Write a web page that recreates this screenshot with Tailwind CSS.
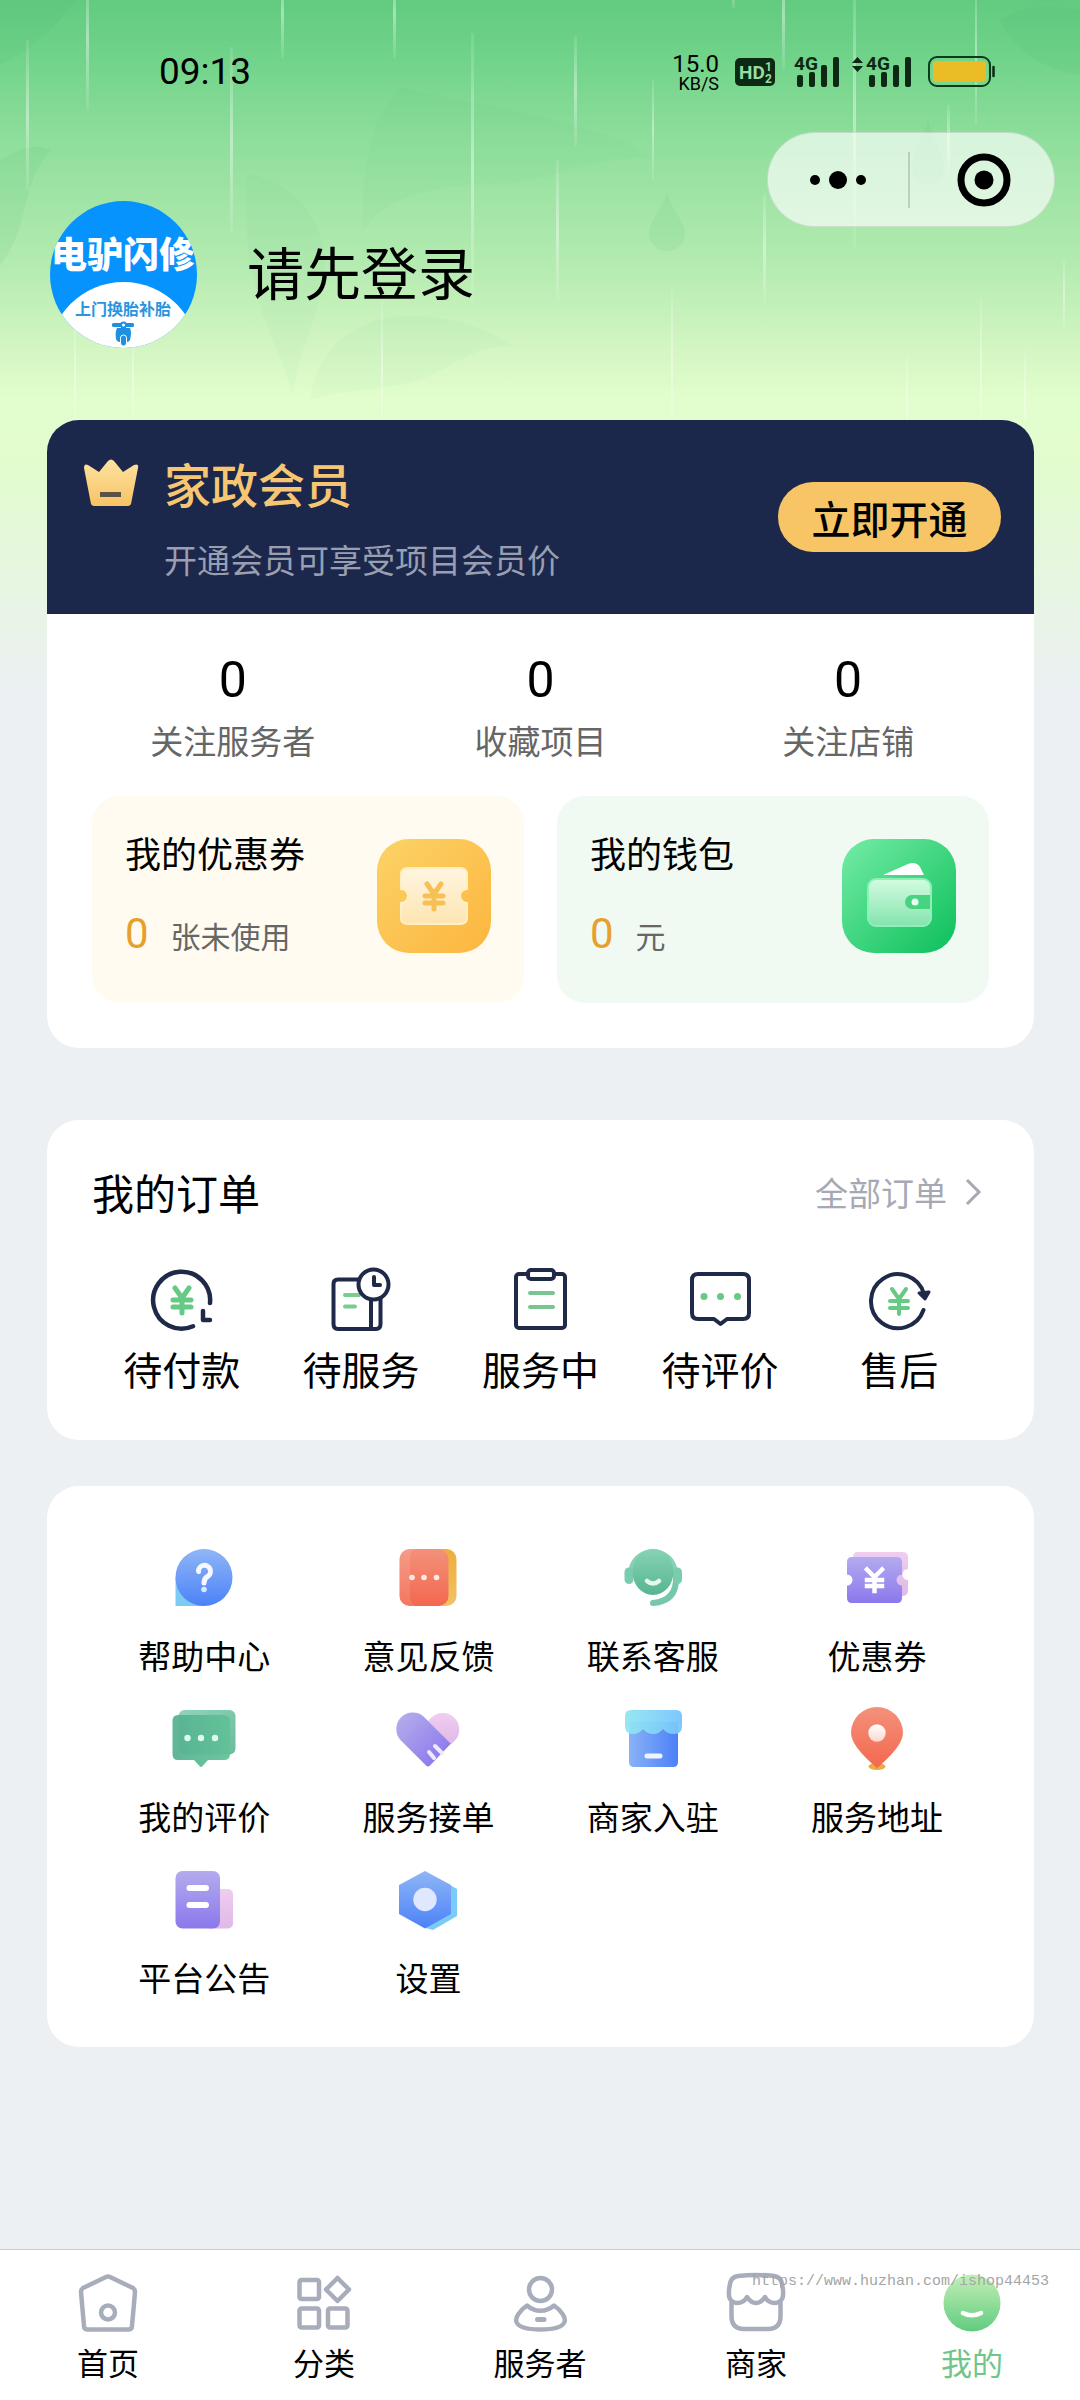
<!DOCTYPE html>
<html lang="zh-CN">
<head>
<meta charset="utf-8">
<meta name="viewport" content="width=device-width, initial-scale=1">
<title>我的</title>
<script src="https://cdn.jsdelivr.net/npm/@tailwindcss/browser@4"></script>
</head>
<body class="bg-[#ecf0f3] text-black font-['Noto_Sans_CJK_SC',sans-serif]">

<!-- shared gradients and the yen glyph -->
<svg class="absolute w-0 h-0" aria-hidden="true">
  <defs>
    <linearGradient id="blue" x1="0" y1="0" x2="0" y2="1"><stop offset="0" stop-color="#8fb6f6"/><stop offset="1" stop-color="#4c82f8"/></linearGradient>
    <linearGradient id="blueH" x1="0" y1="0" x2="1" y2="0"><stop offset="0" stop-color="#8ab2f6"/><stop offset="1" stop-color="#4c80f8"/></linearGradient>
    <linearGradient id="cyan" x1="0" y1="0" x2="1" y2="0"><stop offset="0" stop-color="#92e6f2"/><stop offset="1" stop-color="#76c4fb"/></linearGradient>
    <linearGradient id="red" x1="0" y1="0" x2="0" y2="1"><stop offset="0" stop-color="#f3917b"/><stop offset="1" stop-color="#f3684f"/></linearGradient>
    <linearGradient id="orange" x1="0" y1="0" x2="0" y2="1"><stop offset="0" stop-color="#eead3c"/><stop offset="1" stop-color="#f2c265"/></linearGradient>
    <linearGradient id="purple" x1="0" y1="0" x2="0" y2="1"><stop offset="0" stop-color="#b3abee"/><stop offset="1" stop-color="#8b78ec"/></linearGradient>
    <linearGradient id="purpleD" x1="0" y1="0" x2="1" y2="1"><stop offset="0" stop-color="#b6b0ea"/><stop offset="1" stop-color="#8770ee"/></linearGradient>
    <linearGradient id="pink" x1="0" y1="0" x2="0" y2="1"><stop offset="0" stop-color="#efcdef"/><stop offset="1" stop-color="#dfb9e8"/></linearGradient>
    <linearGradient id="teal" x1="0" y1="0" x2="0" y2="1"><stop offset="0" stop-color="#86d3b4"/><stop offset="1" stop-color="#58b590"/></linearGradient>
    <linearGradient id="tealH" x1="0" y1="0" x2="1" y2="0"><stop offset="0" stop-color="#55b092"/><stop offset="1" stop-color="#61c296"/></linearGradient>
    <linearGradient id="tealL" x1="0" y1="0" x2="1" y2="1"><stop offset="0" stop-color="#8fd4bb"/><stop offset="1" stop-color="#6cbc9d"/></linearGradient>
    <linearGradient id="gold" x1="0" y1="0" x2="1" y2="1"><stop offset="0" stop-color="#fbd366"/><stop offset="1" stop-color="#fdb53f"/></linearGradient>
    <linearGradient id="green" x1="0" y1="0" x2="1" y2="1"><stop offset="0" stop-color="#74eca6"/><stop offset="1" stop-color="#0cbf5a"/></linearGradient>
    <linearGradient id="crown" x1="0" y1="0" x2="0" y2="1"><stop offset="0" stop-color="#fde3a0"/><stop offset="1" stop-color="#f7c364"/></linearGradient>
    <linearGradient id="ticket" x1="0" y1="0" x2="0" y2="1"><stop offset="0" stop-color="#fff5e0"/><stop offset="1" stop-color="#fee5b2"/></linearGradient>
    <linearGradient id="wallet" x1="0" y1="0" x2="0" y2="1"><stop offset="0" stop-color="#d3fbe0"/><stop offset="1" stop-color="#84e4ae"/></linearGradient>
    <linearGradient id="face" x1="0" y1="0" x2="0" y2="1"><stop offset="0" stop-color="#c2f0b6"/><stop offset="1" stop-color="#62cb80"/></linearGradient>
    <linearGradient id="pearl" x1="0" y1="0" x2="0" y2="1"><stop offset="0" stop-color="#ffffff"/><stop offset="1" stop-color="#fdd6cf"/></linearGradient>
    <linearGradient id="rain" x1="0" y1="0" x2="0" y2="1"><stop offset="0" stop-color="#fff" stop-opacity=".1"/><stop offset=".5" stop-color="#fff" stop-opacity=".42"/><stop offset="1" stop-color="#fff" stop-opacity=".08"/></linearGradient>
    <path id="yen" d="M-7-12L0-2L7-12M0-2V13M-9 0H9M-9 7H9" fill="none" stroke-linecap="round" stroke-linejoin="round"/>
    <g id="bars"><rect x="3" y="19" width="6" height="12" rx="2"/><rect x="15" y="16" width="6" height="15" rx="2"/><rect x="27" y="9" width="6" height="22" rx="2"/><rect x="39" y="1" width="6" height="30" rx="2"/></g>
  </defs>
</svg>

<div class="relative min-h-screen flex flex-col">

  <!-- rain backdrop -->
  <div class="absolute inset-x-0 top-0 h-[700px] bg-[linear-gradient(to_bottom,#62cb80_0px,#6ed288_50px,#90df9c_145px,#b4ebb0_265px,#d2f5c2_345px,#e2fecd_400px,#e2fccf_470px,#ecf0f3_690px)]">
    <svg class="w-full h-[420px]" viewBox="0 0 1080 420" preserveAspectRatio="none" aria-hidden="true">
      <g fill="#40b070" fill-opacity=".035">
        <path d="M363 232C360 150 380 105 402 88C470 105 600 120 652 157C560 160 560 185 480 184C430 186 380 200 363 232Z"/>
        <path d="M247 173C295 185 327 220 325 270C320 320 300 340 293 395C275 330 240 300 247 173Z"/>
        <path d="M310 400C320 330 380 310 430 317C480 322 500 340 515 347C470 342 450 375 400 385C370 390 340 390 310 400Z"/>
      </g>
      <g fill="#40b070" fill-opacity=".09">
        <path d="M0 0H75C60 25 30 50 0 65Z"/>
        <path d="M0 160Q30 140 52 150C20 180 30 230 0 265Z"/>
        <path d="M1000 20C1030 0 1060 8 1080 10V75C1040 70 1010 45 1000 20Z"/>
        <path d="M667 192C671 210 685 220 685 234A18 17 0 0 1 649 234C649 220 663 210 667 192Z"/>
        <path d="M928 118C932 140 944 155 944 168A16 17 0 0 1 912 168C912 155 924 140 928 118Z"/>
      </g>
      <g fill="url(#rain)">
        <rect x="26" y="40" width="3" height="150"/><rect x="86" y="-30" width="3" height="140"/><rect x="230" y="47" width="3" height="185"/>
        <rect x="281" y="-30" width="3" height="88"/><rect x="393" y="-30" width="3" height="88"/><rect x="471" y="33" width="3" height="270"/>
        <rect x="574" y="36" width="3" height="110"/><rect x="556" y="160" width="3" height="140"/><rect x="652" y="80" width="2" height="100"/>
        <rect x="732" y="-30" width="3" height="38"/><rect x="782" y="-40" width="3" height="110"/><rect x="853" y="-30" width="3" height="278"/>
        <rect x="947" y="105" width="3" height="68"/><rect x="975" y="-20" width="2" height="145"/><rect x="763" y="195" width="3" height="108"/>
        <rect x="671" y="290" width="2" height="140"/><rect x="980" y="300" width="2" height="140"/><rect x="381" y="300" width="2" height="140"/>
        <rect x="74" y="320" width="2" height="110"/><rect x="132" y="330" width="2" height="100"/><rect x="1024" y="350" width="2" height="90"/>
        <rect x="906" y="355" width="2" height="90"/><rect x="1063" y="260" width="2" height="70"/>
      </g>
    </svg>
  </div>

  <!-- status bar -->
  <div class="relative h-36 pl-[159px] pr-[84px] flex items-center justify-between font-[Roboto,sans-serif]">
    <span class="text-[37px] leading-10">09:13</span>
    <div class="flex items-center text-[#0c2914]">
      <div class="mr-4 flex flex-col items-end text-black">
        <span class="text-2xl leading-6">15.0</span>
        <span class="text-lg leading-4">KB/S</span>
      </div>
      <svg class="w-10 h-7 mr-[19px]" viewBox="0 0 40 28" aria-label="HD">
        <rect width="40" height="28" rx="5" fill="currentColor"/>
        <g fill="#98dca4" font-family="Roboto, sans-serif" font-weight="700"><text x="4" y="21" font-size="19">HD</text><text x="30" y="13" font-size="12">1</text><text x="30" y="25" font-size="12">2</text></g>
      </svg>
      <svg class="w-[46px] h-8 mr-3 overflow-visible" viewBox="0 0 46 32" aria-label="4G">
        <use href="#bars" fill="currentColor"/>
        <text x="0" y="14" font-size="19" font-weight="700" fill="currentColor" font-family="Roboto, sans-serif">4G</text>
      </svg>
      <svg class="w-[60px] h-8 mr-4 overflow-visible" viewBox="0 0 60 32" aria-label="4G">
        <path d="M0 7L5.500 1L11 7ZM0 10H11L5.500 16Z" fill="currentColor"/>
        <use href="#bars" x="14" fill="currentColor"/>
        <text x="14" y="14" font-size="19" font-weight="700" fill="currentColor" font-family="Roboto, sans-serif">4G</text>
      </svg>
      <svg class="w-[68px] h-8" viewBox="0 0 68 32" aria-label="电量">
        <rect x="1" y="1" width="61" height="29" rx="8" fill="none" stroke="#0a3d1a" stroke-width="2"/>
        <rect x="5" y="5" width="53" height="21" rx="4" fill="#eabd27"/>
        <path d="M65.500 11V20" stroke="#0c2914" stroke-width="2.500" stroke-linecap="round"/>
      </svg>
    </div>
  </div>

  <!-- mini-program capsule -->
  <div class="absolute top-[132px] right-[25px] w-72 h-[95px] rounded-full bg-white/65 border border-black/10 flex items-center">
    <button type="button" class="flex-1 h-full flex items-center justify-center" aria-label="更多">
      <svg class="w-16 h-6" viewBox="0 0 64 24"><circle cx="9" cy="12" r="5"/><circle cx="32" cy="12" r="9"/><circle cx="55" cy="12" r="5"/></svg>
    </button>
    <span class="w-0.5 h-14 bg-black/15"></span>
    <button type="button" class="flex-1 h-full pl-1 flex items-center justify-center" aria-label="关闭">
      <svg class="w-14 h-14" viewBox="0 0 56 56"><circle cx="28" cy="28" r="23" fill="none" stroke="#000" stroke-width="7"/><circle cx="28" cy="28" r="9.500"/></svg>
    </button>
  </div>

  <main class="relative flex-1 pl-[47px] pr-[46px] pb-10">
    <!-- profile -->
    <a href="#login" class="mt-[57px] ml-[3px] flex items-center gap-[50px]">
      <svg class="w-[147px] h-[147px] rounded-full" viewBox="0 0 147 147" aria-label="电驴闪修">
        <rect width="147" height="147" fill="#0793fe"/>
        <circle cx="73.500" cy="156" r="75" fill="#fff"/>
        <text x="73" y="67" text-anchor="middle" font-size="36" font-weight="900" fill="#fff" font-family="Noto Sans CJK SC, sans-serif">电驴闪修</text>
        <text x="73" y="114" text-anchor="middle" font-size="16" font-weight="700" fill="#2a94df" font-family="Noto Sans CJK SC, sans-serif">上门换胎补胎</text>
        <g fill="#1f8fe0"><rect x="62" y="122" width="22" height="4" rx="1.500"/><circle cx="73.500" cy="124" r="3.500"/><path d="M67 127H80Q82 131 80 139Q79 141 77 141H70Q67 141 66 138Q65 131 67 127Z"/><rect x="70.500" y="134" width="6" height="11" rx="3" stroke="#fff"/></g>
        <circle cx="73.500" cy="124" r="1.500" fill="#fff"/>
      </svg>
      <span class="mb-2.5 text-[57px] leading-[72px]">请先登录</span>
    </a>

    <!-- membership, stats, assets -->
    <section class="mt-[72px] rounded-[32px] overflow-hidden bg-white">
      <div class="h-[194px] pl-9 pr-[33px] bg-[#1c284b] flex items-center">
        <div class="flex-1 grid grid-cols-[56px_1fr] gap-x-[25px] gap-y-5 items-center">
          <svg class="w-14 h-12" viewBox="0 0 56 48" aria-hidden="true"><path d="M1 9Q1 4 5 6L16 13L25 2Q28-1 31 2L40 13L51 6Q56 4 55 9L48 45Q47 47 45 47H11Q9 47 8 45Z" fill="url(#crown)"/><rect x="17" y="33" width="21" height="5" fill="#5b5347"/></svg>
          <h2 class="text-[47px] leading-16 font-medium text-[#f7c672]">家政会员</h2>
          <p class="col-start-2 text-[33px] leading-12 text-[#999fb1]">开通会员可享受项目会员价</p>
        </div>
        <button type="button" class="w-[223px] h-[70px] rounded-full bg-[#f8c566] text-[39px] leading-[68px] font-medium">立即开通</button>
      </div>

      <div class="mx-8 pt-[38px] grid grid-cols-3 text-center">
        <a href="#workers"><strong class="block text-[50px] leading-14 font-normal font-[Roboto,sans-serif]">0</strong><span class="block mt-3 text-[33px] leading-10 text-[#666]">关注服务者</span></a>
        <a href="#favorites"><strong class="block text-[50px] leading-14 font-normal font-[Roboto,sans-serif]">0</strong><span class="block mt-3 text-[33px] leading-10 text-[#666]">收藏项目</span></a>
        <a href="#shops"><strong class="block text-[50px] leading-14 font-normal font-[Roboto,sans-serif]">0</strong><span class="block mt-3 text-[33px] leading-10 text-[#666]">关注店铺</span></a>
      </div>

      <div class="mt-9 px-[45px] pb-[45px] grid grid-cols-2 gap-[33px]">
        <a href="#coupons" class="h-[207px] pl-[33px] pr-[33px] rounded-[28px] bg-[#fffbf0] flex items-center justify-between">
          <div class="mb-2 flex flex-col gap-[30px]">
            <span class="text-4xl leading-12">我的优惠券</span>
            <span class="flex items-baseline gap-[22px] leading-14"><span class="text-[42px] text-[#e8a02c] font-[Roboto,sans-serif]">0</span><span class="text-[30px] text-[#666]">张未使用</span></span>
          </div>
          <svg class="w-[114px] h-[114px] mb-2" viewBox="0 0 114 114" aria-hidden="true">
            <rect width="114" height="114" rx="32" fill="url(#gold)"/>
            <path d="M31 29H83Q90 29 90 36V50A7 7 0 0 0 90 64V79Q90 85 83 85H31Q24 85 24 79V64A7 7 0 0 0 24 50V36Q24 29 31 29Z" fill="url(#ticket)" stroke="#fff0c4" stroke-width="2"/>
            <use href="#yen" x="57" y="57" stroke="#f7c055" stroke-width="5"/>
          </svg>
        </a>
        <a href="#wallet-page" class="h-[207px] pl-[33px] pr-[33px] rounded-[28px] bg-[#f0f9f2] flex items-center justify-between">
          <div class="mb-2 flex flex-col gap-[30px]">
            <span class="text-4xl leading-12">我的钱包</span>
            <span class="flex items-baseline gap-[22px] leading-14"><span class="text-[42px] text-[#e8a02c] font-[Roboto,sans-serif]">0</span><span class="text-[30px] text-[#666]">元</span></span>
          </div>
          <svg class="w-[114px] h-[114px] mb-2" viewBox="0 0 114 114" aria-hidden="true">
            <rect width="114" height="114" rx="32" fill="url(#green)"/>
            <path d="M41 36L66 25Q74 22 78 28L82 36Z" fill="#fff"/>
            <rect x="26" y="40" width="63" height="47" rx="8" fill="url(#wallet)" stroke="#8df0b8" stroke-width="2"/>
            <path d="M88 56H70A7 7 0 0 0 70 70H88Z" fill="#48d383"/><circle cx="73" cy="63" r="3.500" fill="#e8fff0"/>
          </svg>
        </a>
      </div>
    </section>

    <!-- orders -->
    <section class="mt-[72px] px-[45px] pt-12 pb-12 rounded-[32px] bg-white">
      <div class="flex items-center justify-between">
        <h2 class="text-[42px] leading-12">我的订单</h2>
        <a href="#orders" class="flex items-center gap-4 mr-1.5 text-[33px] leading-12 text-[#a6a9b3]">全部订单
          <svg class="w-5 h-7" viewBox="0 0 20 28" fill="none" stroke="currentColor" stroke-width="3" aria-hidden="true"><path d="M4 2L16 14L4 26"/></svg>
        </a>
      </div>
      <div class="mt-12 grid grid-cols-5 text-center text-[39px] leading-12">
        <a href="#pay" class="flex flex-col items-center gap-2">
          <svg class="w-18 h-18" viewBox="0 0 72 72" fill="none" stroke="#1f2948" stroke-width="4.500" stroke-linecap="round" stroke-linejoin="round" aria-hidden="true"><path d="M64 39A28.500 28.500 0 1 0 47 62.300M57 47V56H64"/><use href="#yen" x="36" y="36" stroke="#66ca85" stroke-width="5"/></svg>
          待付款</a>
        <a href="#wait" class="flex flex-col items-center gap-2">
          <svg class="w-18 h-18" viewBox="0 0 72 72" fill="none" stroke="#1f2948" stroke-width="4" stroke-linecap="round" stroke-linejoin="round" aria-hidden="true"><path d="M33 15.500H13Q8.500 15.500 8.500 20V60Q8.500 65 13 65H51Q55.500 65 55.500 60V34M46 35V64"/><path d="M20 31H34M20 42.500H30" stroke="#78cc8f"/><circle cx="48.500" cy="20.500" r="15" fill="#fff"/><path d="M49 13V21H55"/></svg>
          待服务</a>
        <a href="#doing" class="flex flex-col items-center gap-2">
          <svg class="w-18 h-18" viewBox="0 0 72 72" fill="none" stroke="#1f2948" stroke-width="4" stroke-linecap="round" stroke-linejoin="round" aria-hidden="true"><rect x="12" y="10" width="49" height="54" rx="3"/><rect x="24" y="6" width="26" height="9" rx="3" fill="#fff"/><path d="M26 29H49M26 43H49" stroke="#78c590"/></svg>
          服务中</a>
        <a href="#review" class="flex flex-col items-center gap-2">
          <svg class="w-18 h-18" viewBox="0 0 72 72" fill="none" stroke="#1f2948" stroke-width="4" stroke-linejoin="round" aria-hidden="true"><path d="M14 10H59Q65 10 65 16V49Q65 55 59 55H43L36.500 60L30 55H14Q8 55 8 49V16Q8 10 14 10Z"/><g fill="#66ca85" stroke="none"><circle cx="20" cy="32.500" r="3.500"/><circle cx="36.500" cy="32.500" r="3.500"/><circle cx="53.500" cy="32.500" r="3.500"/></g></svg>
          待评价</a>
        <a href="#after" class="flex flex-col items-center gap-2">
          <svg class="w-18 h-18" viewBox="0 0 72 72" fill="none" stroke="#1f2948" stroke-width="4" stroke-linecap="round" stroke-linejoin="round" aria-hidden="true"><path d="M61 30A27 27 0 1 0 60.500 46"/><path d="M56 29L66 28L62 35Z" fill="#1f2948" stroke-width="3"/><use href="#yen" x="36" y="37" stroke="#66ca85" stroke-width="4"/></svg>
          售后</a>
      </div>
    </section>

    <!-- tools -->
    <section class="mt-[46px] px-[45px] pt-[55px] pb-[50px] rounded-[32px] bg-white grid grid-cols-4 gap-y-[27px] text-center text-[33px] leading-10">
      <a href="#help" class="flex flex-col items-center gap-[22px]">
        <svg class="w-18 h-18" viewBox="0 0 72 72" aria-hidden="true"><path d="M7.500 36V65H36Z" fill="#7ccbf4"/><circle cx="36" cy="36.500" r="28.500" fill="url(#blue)"/><path d="M30.500 30.500A6 6 0 1 1 39.500 35.500Q36 37.500 36 42" fill="none" stroke="#f4f8ff" stroke-width="5" stroke-linecap="round"/><circle cx="36" cy="48.500" r="2.800" fill="#d9e6ff"/></svg>
        帮助中心</a>
      <a href="#feedback" class="flex flex-col items-center gap-[22px]">
        <svg class="w-18 h-18" viewBox="0 0 72 72" aria-hidden="true"><rect x="18" y="8" width="46.500" height="57" rx="10" fill="url(#orange)"/><rect x="7.500" y="8" width="49" height="57" rx="10" fill="url(#red)"/><path d="M25 8Q18 9 18 18V55Q18 64 25 65H17.500Q7.500 65 7.500 55V18Q7.500 8 17.500 8Z" fill="#fff" fill-opacity=".1"/><g fill="#ffeae5"><circle cx="20" cy="36.500" r="2.800"/><circle cx="32" cy="36.500" r="2.800"/><circle cx="44.500" cy="36.500" r="2.800"/></g></svg>
        意见反馈</a>
      <a href="#service" class="flex flex-col items-center gap-[22px]">
        <svg class="w-18 h-18" viewBox="0 0 72 72" aria-hidden="true"><path d="M11 33A25 25 0 0 1 61 33H56A20 20 0 0 0 16 33Z" fill="#86d3b4"/><path d="M59 36Q60 60 36 62" fill="none" stroke="#77c8aa" stroke-width="6" stroke-linecap="round"/><rect x="7.500" y="26.500" width="9" height="16.500" rx="4.500" fill="#7accae"/><rect x="56" y="26.500" width="9" height="16.500" rx="4.500" fill="#7accae"/><ellipse cx="36" cy="31" rx="20.500" ry="23" fill="url(#teal)"/><path d="M30 40Q36 45 42 40" fill="none" stroke="#e3f8ee" stroke-width="4.500" stroke-linecap="round"/></svg>
        联系客服</a>
      <a href="#coupon" class="flex flex-col items-center gap-[22px]">
        <svg class="w-18 h-18" viewBox="0 0 72 72" aria-hidden="true"><path d="M17 11H61Q67 11 67 16V28A5.500 5.500 0 0 0 67 39V49Q67 55 61 55H17Q12 55 12 49V16Q12 11 17 11Z" fill="url(#pink)"/><path d="M11 16H56Q61 16 61 21V33.500A5.500 5.500 0 0 0 61 44.500V57Q61 62 56 62H11Q6 62 6 57V44.500A5.500 5.500 0 0 0 6 33.500V21Q6 16 11 16Z" fill="url(#purple)"/><path d="M26 28.500L33.500 36L41 28.500M33.500 36V50M26 39H41M26 45H41" fill="none" stroke="#fff" stroke-width="4.500" stroke-linecap="square"/></svg>
        优惠券</a>
      <a href="#my-reviews" class="flex flex-col items-center gap-[22px]">
        <svg class="w-18 h-18" viewBox="0 0 72 72" aria-hidden="true"><rect x="10.500" y="8" width="57" height="44.500" rx="6" fill="url(#tealL)"/><path d="M10 13H56Q62 13 62 19V52Q62 58 56 58H40L34.500 64Q33 66 31.500 64L26 58H10Q4.500 58 4.500 52V19Q4.500 13 10 13Z" fill="url(#tealH)" fill-opacity=".93"/><g fill="#dcfbec"><circle cx="19.500" cy="36" r="3.200"/><circle cx="33" cy="36" r="3.200"/><circle cx="47" cy="36" r="3.200"/></g></svg>
        我的评价</a>
      <a href="#accept" class="flex flex-col items-center gap-[22px]">
        <svg class="w-18 h-18" viewBox="0 0 72 72" aria-hidden="true"><path d="M36 19L40 15A16.500 16.500 0 0 1 63.500 38L58.800 42.500Z" fill="url(#pink)"/><path d="M8.500 38A16.500 16.500 0 0 1 31.800 14.700L58.800 41.700L38 63.500Q36 65.500 34 63.500Z" fill="url(#purpleD)"/><path d="M37 50L42 56M43 44L50 51" fill="none" stroke="#eeeaff" stroke-width="4" stroke-linecap="round"/></svg>
        服务接单</a>
      <a href="#join" class="flex flex-col items-center gap-[22px]">
        <svg class="w-18 h-18" viewBox="0 0 72 72" aria-hidden="true"><path d="M12 20H61V60Q61 65 56 65H17Q12 65 12 60Z" fill="url(#blueH)"/><path d="M14 8H59Q65 8 65 14V24Q65 32 57 32Q50 32 46 27Q42 32 36.500 32Q30 32 26 27Q22 32 16 32Q8 32 8 24V14Q8 8 14 8Z" fill="url(#cyan)" fill-opacity=".95"/><path d="M30 54H43" stroke="#eef4ff" stroke-width="5" stroke-linecap="round"/></svg>
        商家入驻</a>
      <a href="#address" class="flex flex-col items-center gap-[22px]">
        <svg class="w-18 h-18" viewBox="0 0 72 72" aria-hidden="true"><ellipse cx="36" cy="64.500" rx="8.500" ry="3.500" fill="#e9ac45"/><path d="M36 5A26 26 0 0 1 62 31Q62 44 36 66Q10 44 10 31A26 26 0 0 1 36 5Z" fill="url(#red)"/><circle cx="36" cy="31" r="8.700" fill="url(#pearl)"/></svg>
        服务地址</a>
      <a href="#notice" class="flex flex-col items-center gap-[22px]">
        <svg class="w-18 h-18" viewBox="0 0 72 72" aria-hidden="true"><rect x="36" y="26" width="29" height="39.500" rx="5" fill="url(#pink)"/><rect x="7.500" y="8" width="44.500" height="57.500" rx="7" fill="url(#purple)"/><path d="M21.500 25H38M21.500 42H38" stroke="#fff" stroke-width="6" stroke-linecap="round"/></svg>
        平台公告</a>
      <a href="#settings" class="flex flex-col items-center gap-[22px]">
        <svg class="w-18 h-18" viewBox="0 0 72 72" aria-hidden="true"><path d="M58 22L65 26V53L41 67L34 65Z" fill="#7accf6"/><path d="M33 8L59 22V51L33 65.500L7 51V22Z" fill="url(#blue)"/><circle cx="33" cy="36.500" r="11.700" fill="#dfe8fe"/></svg>
        设置</a>
    </section>
  </main>

  <!-- tab bar -->
  <nav class="sticky bottom-0 pt-[21px] pb-[18px] border-t border-[#c9cdd0] bg-white grid grid-cols-5 text-center text-[31px] leading-10">
    <a href="#home" class="flex flex-col items-center gap-[7px]">
      <svg class="w-16 h-16" viewBox="0 0 64 64" fill="none" stroke="#a7adba" stroke-width="4.500" stroke-linejoin="round" aria-hidden="true"><path d="M30 6Q32 5 34 6L57 17Q59 18.500 59 21L56 55Q56 58.500 52 58.500H12Q8 58.500 8 55L5 21Q5 18.500 7 17Z"/><circle cx="32" cy="41.500" r="7"/></svg>
      首页</a>
    <a href="#category" class="flex flex-col items-center gap-[7px]">
      <svg class="w-16 h-16" viewBox="0 0 64 64" fill="none" stroke="#a7adba" stroke-width="4.500" stroke-linejoin="round" aria-hidden="true"><rect x="7.500" y="9" width="19.500" height="19" rx="2"/><rect x="7.500" y="37.500" width="19.500" height="19" rx="2"/><rect x="36" y="37.500" width="19.500" height="19" rx="2"/><path d="M45.500 7L57 18.500L45.500 30L34 18.500Z"/></svg>
      分类</a>
    <a href="#staff" class="flex flex-col items-center gap-[7px]">
      <svg class="w-16 h-16" viewBox="0 0 64 64" fill="none" stroke="#a7adba" stroke-width="4.500" stroke-linejoin="round" stroke-linecap="round" aria-hidden="true"><circle cx="32.500" cy="18.500" r="11.500"/><path d="M19 34.500C11 40 7 47 8.500 51C11 57 22 58.500 32.500 58.500C43 58.500 54 57 56.500 51C58 47 54 40 46 34.500C38 41.500 27 41.500 19 34.500Z"/><path d="M29.500 48.500H36" stroke-width="5"/></svg>
      服务者</a>
    <a href="#merchant" class="flex flex-col items-center gap-[7px]">
      <svg class="w-16 h-16" viewBox="0 0 64 64" fill="none" stroke="#a7adba" stroke-width="4.500" stroke-linejoin="round" aria-hidden="true"><path d="M14 5Q32 3 50 5Q57 6 58 13Q60 22 58.500 27Q56 32 51 32Q44 32 41 26Q37 32 32 32Q27 32 23 26Q20 32 13 32Q8 32 5.500 27Q4 22 6 13Q7 6 14 5Z"/><path d="M7.500 31V45Q7.500 58 20 58H44Q56.500 58 56.500 45V31"/></svg>
      商家</a>
    <a href="#mine" class="flex flex-col items-center gap-[7px] text-[#6fc58a]" aria-current="page">
      <svg class="w-16 h-16" viewBox="0 0 64 64" aria-hidden="true"><circle cx="32" cy="32" r="28.500" fill="url(#face)"/><path d="M23 42Q32 46.500 41 42" fill="none" stroke="#fff" stroke-width="4.500" stroke-linecap="round"/></svg>
      我的</a>
    <span class="absolute right-[31px] top-[22px] text-[15px] leading-5 text-[#a3a6a6] font-['Liberation_Mono',monospace]">https://www.huzhan.com/ishop44453</span>
  </nav>
</div>
</body>
</html>
